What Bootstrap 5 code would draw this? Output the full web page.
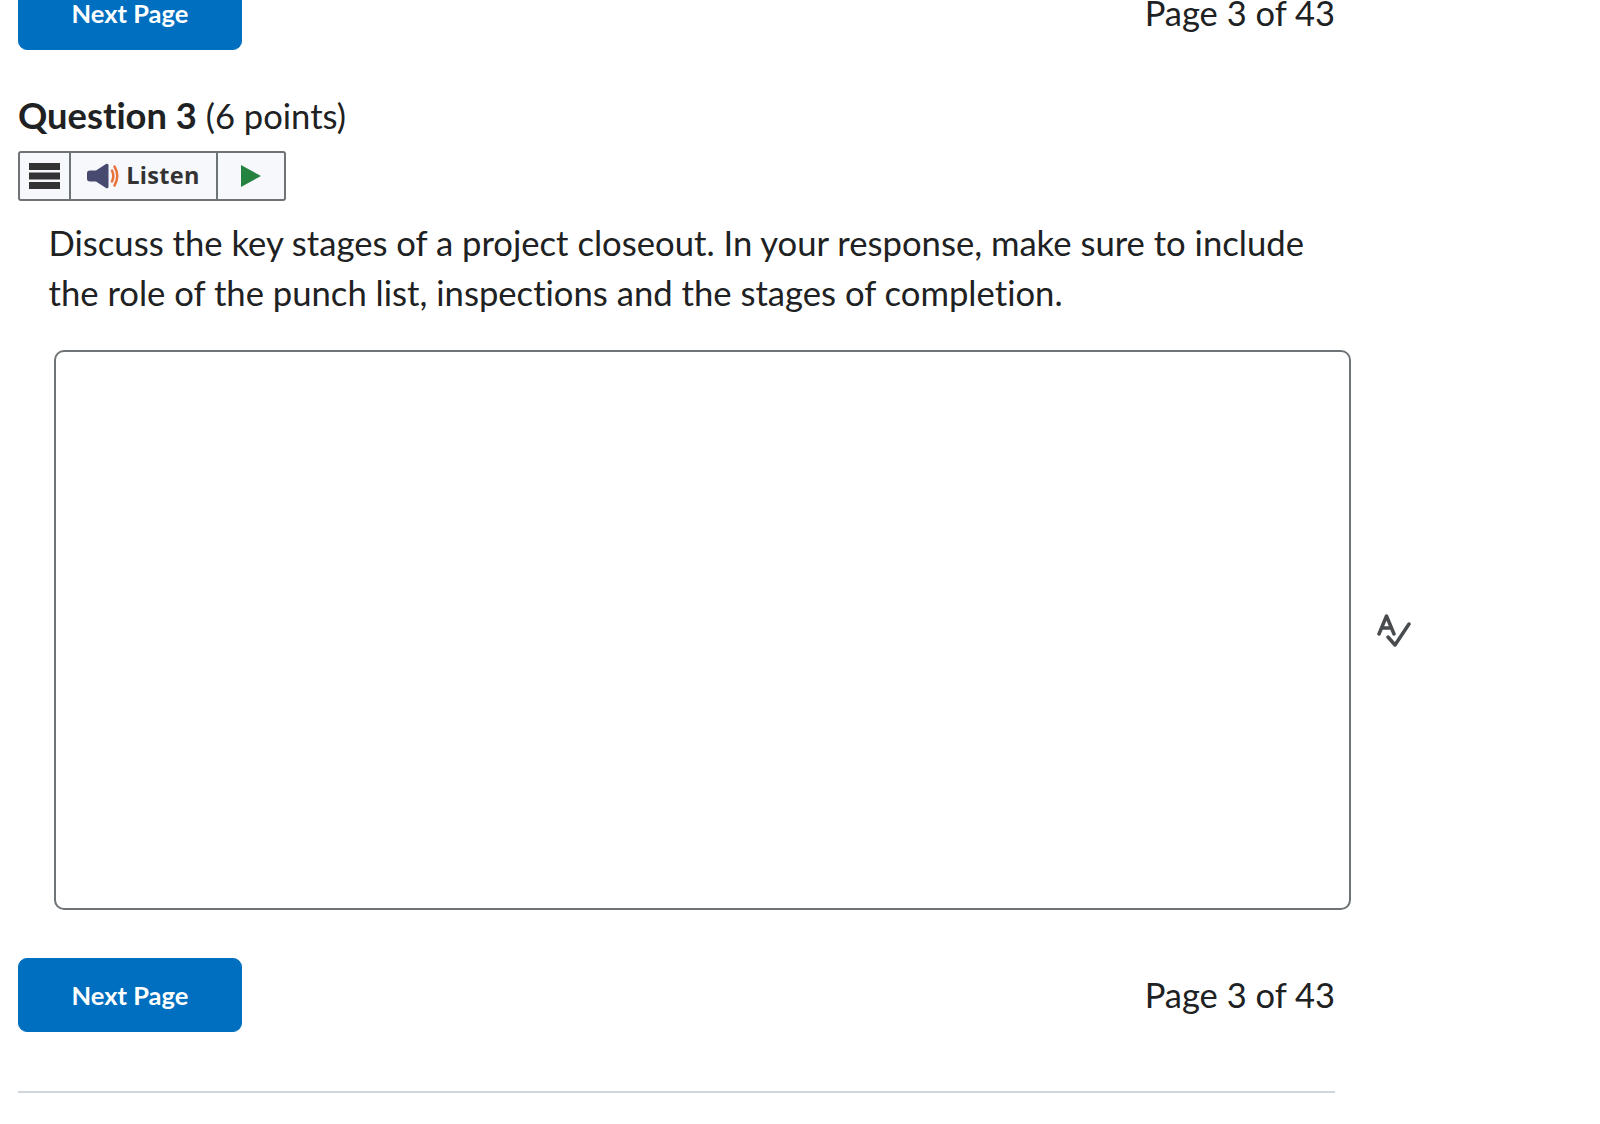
<!DOCTYPE html>
<html lang="en">
<head>
    <meta charset="UTF-8">
    <title>Question 3</title>
    <link href="https://cdn.jsdelivr.net/npm/bootstrap@5.3.2/dist/css/bootstrap.min.css" rel="stylesheet">
    <style>
        body {
            font-family: Lato, "Liberation Sans", sans-serif;
            font-variant-ligatures: none;
            color: #202122;
            background: #fff;
            overflow: hidden;
        }
        .quiz-page {
            width: 1317px;
            margin-top: -24px;
            margin-left: 18px;
        }
        .next-btn {
            width: 224px;
            height: 74px;
            background: #006fbf;
            border-color: #006fbf;
            border-radius: 9px;
            font-size: 25.5px;
            font-weight: 700;
            color: #fff;
        }
        .page-count {
            font-size: 34.5px;
            line-height: 44px;
        }
        .q-title {
            font-size: 34.6px;
            font-weight: 400;
            line-height: 44px;
            margin: 43px 0 13px;
        }
        .q-title b {
            font-size: 36.3px;
            font-weight: 700;
        }
        .listen-bar {
            width: 268px;
            height: 50px;
            background: #f6f8fc;
            border: 2px solid #6e7376;
            border-radius: 3px;
        }
        .listen-bar > div {
            height: 100%;
        }
        .bar-menu {
            width: 51px;
            border-right: 2px solid #6e7376;
        }
        .bar-listen {
            width: 147px;
            border-right: 2px solid #6e7376;
            font-family: "Open Sans", sans-serif;
            font-size: 23.5px;
            font-weight: 700;
            letter-spacing: .3px;
            color: #333;
            gap: 7px;
        }
        .q-text {
            font-size: 34.65px;
            line-height: 50px;
            margin: 17px 0 32px 30.5px;
            width: 1290px;
        }
        .answer-row {
            width: 1420px;
        }
        .answer-box {
            width: 1297px;
            height: 560px;
            margin-left: 36px;
            border: 2px solid #6e7376;
            border-radius: 10px;
            resize: none;
        }
        .spell-icon {
            margin-left: 26px;
            margin-top: 2px;
        }
        .pager-bottom {
            margin-top: 48px;
        }
        .end-rule {
            margin: 59px 0 0;
            border: 0;
            border-top: 2px solid #d0d6d9;
            opacity: 1;
        }
    </style>
</head>
<body>
    <div class="quiz-page">
        <div class="d-flex justify-content-between align-items-center">
            <button type="button" class="btn next-btn p-0">Next Page</button>
            <span class="page-count">Page 3 of 43</span>
        </div>

        <h2 class="q-title"><b>Question 3</b> (6 points)</h2>

        <div class="listen-bar d-flex">
            <div class="bar-menu d-flex align-items-center justify-content-center">
                <svg width="32" height="26" viewBox="0 0 32 26">
                    <rect y="0" width="31" height="7" fill="#333"/>
                    <rect y="9.5" width="31" height="7" fill="#333"/>
                    <rect y="19" width="31" height="7" fill="#333"/>
                </svg>
            </div>
            <div class="bar-listen d-flex align-items-center justify-content-center">
                <svg width="32" height="26" viewBox="0 0 32 26">
                    <path d="M3 7.500h6L19 1c1.500-.8 2.500 0 2.500 1.500v21c0 1.500-1 2.300-2.500 1.500L9 18.500H3c-2 0-3-1-3-2.500v-6c0-1.500 1-2.500 3-2.500z" fill="#474a6e"/>
                    <path d="M25 7.500c1.700 3.500 1.700 7.500 0 11M27.500 3.500c3.500 6 3.500 13 0 19" fill="none" stroke="#e8743b" stroke-width="2.500" stroke-linecap="round"/>
                </svg>
                <span>Listen</span>
            </div>
            <div class="flex-grow-1 d-flex align-items-center justify-content-center">
                <svg width="20" height="22" viewBox="0 0 20 22">
                    <path d="M0 0L20 11L0 22z" fill="#24843f"/>
                </svg>
            </div>
        </div>

        <p class="q-text">Discuss the key stages of a project closeout. In your response, make sure to include the role of the punch list, inspections and the stages of completion.</p>

        <div class="answer-row d-flex align-items-center">
            <textarea class="answer-box form-control flex-shrink-0" aria-label="Answer"></textarea>
            <svg class="spell-icon flex-shrink-0" width="34" height="34" viewBox="0 0 34 34">
                <path d="M2 20L9.500 2L17 20M5 14h9" fill="none" stroke="#494c4e" stroke-width="3.500" stroke-linecap="round" stroke-linejoin="round"/>
                <path d="M11 23l7 8L32 10" fill="none" stroke="#494c4e" stroke-width="3.500" stroke-linecap="round" stroke-linejoin="round"/>
            </svg>
        </div>

        <div class="d-flex justify-content-between align-items-center pager-bottom">
            <button type="button" class="btn next-btn p-0">Next Page</button>
            <span class="page-count">Page 3 of 43</span>
        </div>

        <hr class="end-rule">
    </div>
    <script src="https://cdn.jsdelivr.net/npm/bootstrap@5.3.2/dist/js/bootstrap.bundle.min.js"></script>
</body>
</html>
